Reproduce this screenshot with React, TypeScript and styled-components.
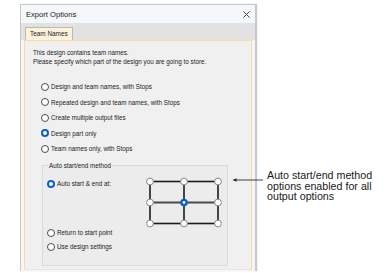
import React from "react";
import styled, { createGlobalStyle } from "styled-components";

const GlobalStyle = createGlobalStyle`
  html, body {
    margin: 0;
    padding: 0;
    background: #ffffff;
  }
  body {
    font-family: "Liberation Sans", Arial, sans-serif;
    color: #1b1b1b;
  }
`;

const Page = styled.div`
  position: relative;
  width: 392px;
  height: 273px;
  overflow: hidden;
  box-sizing: border-box;
  padding: 4px 0 0 20px;
`;

const Dialog = styled.div`
  width: 236px;
  height: 267px;
  box-sizing: border-box;
  border: 1px solid #c6c8ca;
  border-bottom: none;
  background: #f6f6f6;
  display: flex;
  flex-direction: column;
  box-shadow: 1px 0 1px rgba(80, 105, 130, 0.35);
`;

const TitleBar = styled.div`
  height: 18px;
  flex: none;
  display: flex;
  align-items: center;
  justify-content: space-between;
  padding: 0 5px 0 5px;
  background: #f4f8fb;
  font-size: 7.6px;
`;

const TabStrip = styled.div`
  height: 17px;
  flex: none;
  display: flex;
  align-items: flex-end;
  padding-left: 4px;
  background: #e2e2e2;
`;

const Tab = styled.div`
  height: 13px;
  box-sizing: border-box;
  padding: 0 4px;
  border: 1px solid #b9b9b9;
  border-bottom: none;
  background: #fdf3dc;
  font-size: 6.4px;
  line-height: 12px;
`;

const Panel = styled.div`
  flex: 1;
  margin: 0 3px 1px 3px;
  box-sizing: border-box;
  border: 1.5px solid #f8dc9c;
  border-bottom: 1px solid #e6e6e6;
  background: #f0f0f0;
  padding: 7px 8px 0 8px;
  display: flex;
  flex-direction: column;
  font-size: 6.3px;
`;

const Intro = styled.p`
  margin: 0;
  line-height: 9px;
`;

const RadioList = styled.div`
  margin: 13px 0 0 8px;
  display: flex;
  flex-direction: column;
`;

const RadioRow = styled.label<{ $height?: number }>`
  display: flex;
  align-items: center;
  gap: 2px;
  height: ${(p) => p.$height ?? 15.5}px;
  white-space: nowrap;
`;

const RadioDot = styled.span<{ $checked?: boolean }>`
  flex: none;
  width: 8px;
  height: 8px;
  box-sizing: border-box;
  border-radius: 50%;
  background: #ffffff;
  border: ${(p) => (p.$checked ? "2.5px solid #0b5fc4" : "1px solid #4d4d4d")};
`;

const GroupBox = styled.fieldset`
  margin: 4px 0 0 9px;
  width: 186px;
  box-sizing: border-box;
  border: 1px solid #dadada;
  background: #ececec;
  padding: 7px 4px 11px 4px;
  display: flex;
  flex-direction: column;
`;

const Legend = styled.legend`
  padding: 0 1px;
  margin-left: 1px;
  font-size: 6.3px;
  line-height: 9px;
`;

const TopRow = styled.div`
  display: flex;
  align-items: flex-start;
`;

const OptionCell = styled.div`
  width: 99px;
  flex: none;
`;

const GridPicker = styled.svg`
  display: block;
  flex: none;
  margin-top: 0;
`;

const SubOptions = styled.div`
  margin-top: -2px;
  display: flex;
  flex-direction: column;
`;

const CloseIcon = styled.svg`
  display: block;
`;

const Callout = styled.div`
  position: absolute;
  left: 232px;
  top: 170px;
  display: flex;
  align-items: flex-start;
  gap: 3px;
`;

const CalloutText = styled.div`
  font-family: "Liberation Sans", Arial, sans-serif;
  font-size: 10.7px;
  line-height: 10.6px;
  color: #1a1a1a;
`;

const Radio = ({
  label,
  checked,
  height,
}: {
  label: string;
  checked?: boolean;
  height?: number;
}) => (
  <RadioRow $height={height}>
    <RadioDot $checked={checked} />
    {label}
  </RadioRow>
);

const xs = [4, 38, 72];
const ys = [4.5, 25.5, 46.5];

const StartEndGrid = () => (
  <GridPicker width="76" height="51" viewBox="0 0 76 51">
    <g stroke="#1c1c1c" strokeWidth="1.6" fill="none">
      <rect x="4" y="4.5" width="68" height="42" />
      <line x1="38" y1="4.5" x2="38" y2="46.5" />
    </g>
    <line x1="4" y1="25.5" x2="72" y2="25.5" stroke="#4a4a4a" strokeWidth="2.2" />
    {ys.map((y) =>
      xs.map((x) => {
        const selected = x === 38 && y === 25.5;
        return selected ? (
          <g key={`${x}-${y}`}>
            <circle cx={x} cy={y} r="3.8" fill="#0b5fc4" />
            <circle cx={x} cy={y} r="1.4" fill="#ffffff" />
          </g>
        ) : (
          <circle
            key={`${x}-${y}`}
            cx={x}
            cy={y}
            r="3.4"
            fill="#ffffff"
            stroke="#7a7a7a"
            strokeWidth="0.9"
          />
        );
      })
    )}
  </GridPicker>
);

export default function App() {
  return (
    <Page>
      <GlobalStyle />
      <Dialog>
        <TitleBar>
          <span>Export Options</span>
          <CloseIcon width="7" height="7" viewBox="0 0 7 7">
            <path d="M0.5 0.5 L6.5 6.5 M6.5 0.5 L0.5 6.5" stroke="#333" strokeWidth="0.9" />
          </CloseIcon>
        </TitleBar>
        <TabStrip>
          <Tab>Team Names</Tab>
        </TabStrip>
        <Panel>
          <Intro>
            This design contains team names.
            <br />
            Please specify which part of the design you are going to store.
          </Intro>
          <RadioList>
            <Radio label="Design and team names, with Stops" />
            <Radio label="Repeated design and team names, with Stops" />
            <Radio label="Create multiple output files" />
            <Radio label="Design part only" checked />
            <Radio label="Team names only, with Stops" />
          </RadioList>
          <GroupBox>
            <Legend>Auto start/end method</Legend>
            <TopRow>
              <OptionCell>
                <Radio label="Auto start & end at:" checked height={14} />
              </OptionCell>
              <StartEndGrid />
            </TopRow>
            <SubOptions>
              <Radio label="Return to start point" height={14} />
              <Radio label="Use design settings" height={14} />
            </SubOptions>
          </GroupBox>
        </Panel>
      </Dialog>
      <Callout>
        <svg width="32" height="6" viewBox="0 0 32 6" style={{ marginTop: 7, display: "block" }}>
          <line x1="2" y1="3" x2="31" y2="3" stroke="#2a2a2a" strokeWidth="0.9" />
          <path d="M0.5 3 L4.5 1.3 L4.5 4.7 Z" fill="#2a2a2a" />
        </svg>
        <CalloutText>
          Auto start/end method
          <br />
          options enabled for all
          <br />
          output options
        </CalloutText>
      </Callout>
    </Page>
  );
}
